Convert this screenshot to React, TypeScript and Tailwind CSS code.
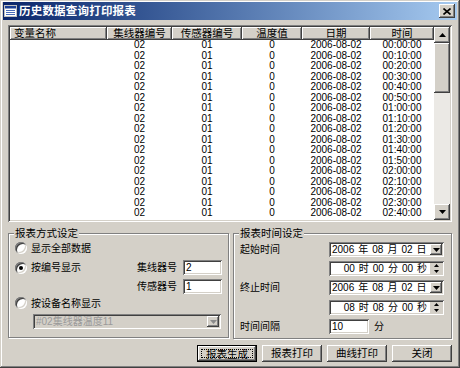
import React from "react";

const RAISED =
  "bg-[#d4d0c8] shadow-[inset_-1px_-1px_0_#404040,inset_1px_1px_0_#ffffff,inset_-2px_-2px_0_#808080,inset_2px_2px_0_#d4d0c8]";
const SUNKEN =
  "shadow-[inset_1px_1px_0_#808080,inset_-1px_-1px_0_#ffffff,inset_2px_2px_0_#404040,inset_-2px_-2px_0_#d4d0c8]";

const pad = (n: number) => (n < 10 ? `0${n}` : `${n}`);
const rows = Array.from({ length: 17 }, (_, i) => {
  const m = i * 10;
  return `${pad(Math.floor(m / 60))}:${pad(m % 60)}:00`;
});

const cols = [
  { w: "w-[97px]", label: "变量名称" },
  { w: "w-[65px]", label: "集线器编号" },
  { w: "w-[70px]", label: "传感器编号" },
  { w: "w-[60px]", label: "温度值" },
  { w: "w-[68px]", label: "日期" },
  { w: "w-[64px]", label: "时间" },
];

function Down({ color = "#000" }: { color?: string }) {
  return (
    <svg width="7" height="4" viewBox="0 0 7 4">
      <polygon points="0,0 7,0 3.5,4" fill={color} />
    </svg>
  );
}
function Up({ color = "#000" }: { color?: string }) {
  return (
    <svg width="7" height="4" viewBox="0 0 7 4">
      <polygon points="0,4 7,4 3.5,0" fill={color} />
    </svg>
  );
}

function Radio({ checked }: { checked?: boolean }) {
  return (
    <div
      className={`w-[12px] h-[12px] rounded-full bg-white flex items-center justify-center shrink-0 ${SUNKEN}`}
    >
      {checked && <div className="w-[4px] h-[4px] rounded-full bg-black" />}
    </div>
  );
}

function DateBox() {
  return (
    <div className={`w-[115px] h-[15px] bg-white flex items-center p-[2px] ${SUNKEN}`}>
      <div className="flex-1 flex items-center gap-[4px] pl-[1px] leading-[11px]">
        <span>2006</span>
        <span>年</span>
        <span>08</span>
        <span>月</span>
        <span>02</span>
        <span>日</span>
      </div>
      <div className={`w-[12px] h-full flex items-center justify-center ${RAISED}`}>
        <Down />
      </div>
    </div>
  );
}

function TimeBox({ h, m }: { h: string; m: string }) {
  return (
    <div className={`w-[115px] h-[15px] bg-white flex items-center p-[2px] ${SUNKEN}`}>
      <div className="flex-1 flex items-center justify-end gap-[4px] pr-[3px] leading-[11px]">
        <span>{h}</span>
        <span>时</span>
        <span>{m}</span>
        <span>分</span>
        <span>00</span>
        <span>秒</span>
      </div>
      <div className="w-[12px] h-full flex flex-col">
        <div className="flex-1 flex items-center justify-center bg-[#d4d0c8]">
          <svg width="5" height="3" viewBox="0 0 5 3">
            <polygon points="0,3 5,3 2.5,0" fill="#000" />
          </svg>
        </div>
        <div className="flex-1 flex items-center justify-center bg-[#d4d0c8]">
          <svg width="5" height="3" viewBox="0 0 5 3">
            <polygon points="0,0 5,0 2.5,3" fill="#000" />
          </svg>
        </div>
      </div>
    </div>
  );
}

function Field({ value, w }: { value: string; w: string }) {
  return (
    <div className={`${w} h-[15px] bg-white flex items-center px-[3px] leading-[11px] ${SUNKEN}`}>
      {value}
    </div>
  );
}

function Btn({ label, focused }: { label: string; focused?: boolean }) {
  if (focused) {
    return (
      <div className="w-[60px] h-[17px] border border-black">
        <div className={`w-full h-full flex items-center justify-center p-[3px] ${RAISED}`}>
          <div className="w-full h-full border border-dotted border-black flex items-center justify-center leading-[10px]">
            {label}
          </div>
        </div>
      </div>
    );
  }
  return (
    <div className={`w-[60px] h-[17px] flex items-center justify-center leading-[11px] ${RAISED}`}>
      {label}
    </div>
  );
}

export default function App() {
  return (
    <div
      className={`w-[460px] h-[368px] bg-[#d4d0c8] font-['Liberation_Sans','Noto_Sans_CJK_SC',sans-serif] text-[10.5px] text-black flex flex-col pt-[2px] px-[3px] overflow-hidden shadow-[inset_-1px_-1px_0_#404040,inset_1px_1px_0_#d4d0c8,inset_-2px_-2px_0_#808080,inset_2px_2px_0_#ffffff]`}
    >
      {/* Title bar */}
      <div className="h-[18px] shrink-0 flex items-center bg-linear-to-r from-[#0a246a] to-[#a6caf0] pl-[1px] pr-[2px]">
        <svg width="13" height="12" viewBox="0 0 13 12" className="shrink-0">
          <rect x="0.5" y="0.5" width="12" height="11" fill="#ffffff" stroke="#c0c0c0" />
          <rect x="1" y="1" width="11" height="2.5" fill="#1c3f94" />
          <rect x="2" y="5" width="9" height="1" fill="#4a6cb8" />
          <rect x="2" y="7" width="9" height="1" fill="#4a6cb8" />
          <rect x="2" y="9" width="9" height="1" fill="#4a6cb8" />
        </svg>
        <span className="ml-[2px] text-white font-bold text-[11.5px] leading-[14px] tracking-[0.2px]">
          历史数据查询打印报表
        </span>
        <div className={`ml-auto w-[16px] h-[14px] flex items-center justify-center ${RAISED}`}>
          <svg width="8" height="7" viewBox="0 0 8 7">
            <path d="M0.5 0.5L7.5 6.5M7.5 0.5L0.5 6.5" stroke="#000" strokeWidth="1.6" />
          </svg>
        </div>
      </div>

      {/* List view */}
      <div className={`mt-[5px] ml-[5px] w-[444px] h-[197px] shrink-0 bg-white p-[2px] flex ${SUNKEN}`}>
        <div className="flex-1 flex flex-col overflow-hidden">
          <div className="h-[13px] flex shrink-0">
            {cols.map((c, i) => (
              <div
                key={i}
                className={`${c.w} h-full flex items-center leading-[11px] ${
                  i === 0 ? "justify-start pl-[4px]" : "justify-center"
                } bg-[#d4d0c8] shadow-[inset_-1px_-1px_0_#404040,inset_1px_1px_0_#ffffff,inset_-2px_-2px_0_#808080]`}
              >
                {c.label}
              </div>
            ))}
          </div>
          <div className="flex flex-col text-[10px]">
            {rows.map((t, i) => (
              <div key={i} className="h-[10.5px] leading-[10.5px] flex">
                <div className="w-[97px]" />
                <div className="w-[65px] text-center">02</div>
                <div className="w-[70px] text-center">01</div>
                <div className="w-[60px] text-center">0</div>
                <div className="w-[68px] text-center">2006-08-02</div>
                <div className="w-[64px] text-center">{t}</div>
              </div>
            ))}
          </div>
        </div>
        <div className="w-[16px] h-full flex flex-col bg-[#ebe9e5]">
          <div className={`h-[16px] flex items-center justify-center shrink-0 ${RAISED}`}>
            <Up />
          </div>
          <div className="flex-1">
            <div className={`h-[50px] ${RAISED}`} />
          </div>
          <div className={`h-[16px] flex items-center justify-center shrink-0 ${RAISED}`}>
            <Down />
          </div>
        </div>
      </div>

      {/* Group boxes */}
      <div className="mt-[11px] ml-[5px] flex gap-[4px] items-start">
        {/* Left group */}
        <div className="relative w-[221px] h-[105px] border border-[#808080] shadow-[inset_1px_1px_0_#ffffff,1px_1px_0_#ffffff] text-[10px]">
          <span className="absolute -top-[7px] left-[5px] px-[1px] bg-[#d4d0c8] leading-[12px] text-[10.5px]">
            报表方式设定
          </span>
          <div className="flex flex-col pt-[7px] pl-[6px] pr-[6px]">
            <div className="h-[14px] flex items-center gap-[4px]">
              <Radio />
              <span>显示全部数据</span>
            </div>
            <div className="mt-[5px] h-[15px] flex items-center">
              <Radio checked />
              <span className="ml-[4px]">按编号显示</span>
              <span className="ml-auto mr-[6px]">集线器号</span>
              <Field value="2" w="w-[39px]" />
            </div>
            <div className="mt-[4px] h-[15px] flex items-center justify-end">
              <span className="mr-[6px]">传感器号</span>
              <Field value="1" w="w-[39px]" />
            </div>
            <div className="mt-[2px] h-[14px] flex items-center gap-[4px]">
              <Radio />
              <span>按设备名称显示</span>
            </div>
            <div
              className={`mt-[4px] ml-[18px] w-[188px] h-[15px] bg-[#d4d0c8] flex items-center p-[2px] ${SUNKEN}`}
            >
              <span className="flex-1 pl-[1px] text-[#9a9a9a] leading-[11px]">
                #02集线器温度11
              </span>
              <div className={`w-[12px] h-full flex items-center justify-center ${RAISED}`}>
                <Down color="#8a8a8a" />
              </div>
            </div>
          </div>
        </div>

        {/* Right group */}
        <div className="relative w-[219px] h-[106px] border border-[#808080] shadow-[inset_1px_1px_0_#ffffff,1px_1px_0_#ffffff] text-[10px]">
          <span className="absolute -top-[7px] left-[5px] px-[1px] bg-[#d4d0c8] leading-[12px] text-[10.5px]">
            报表时间设定
          </span>
          <div className="flex flex-col pt-[8px] pl-[6px] gap-[4px]">
            <div className="flex items-center">
              <span className="w-[89px]">起始时间</span>
              <DateBox />
            </div>
            <div className="flex items-center">
              <span className="w-[89px]" />
              <TimeBox h="00" m="00" />
            </div>
            <div className="flex items-center">
              <span className="w-[89px]">终止时间</span>
              <DateBox />
            </div>
            <div className="mt-[1px] flex items-center">
              <span className="w-[89px]" />
              <TimeBox h="08" m="08" />
            </div>
            <div className="flex items-center">
              <span className="w-[89px]">时间间隔</span>
              <Field value="10" w="w-[40px]" />
              <span className="ml-[5px]">分</span>
            </div>
          </div>
        </div>
      </div>

      {/* Buttons */}
      <div className="mt-[6px] flex justify-end gap-[5px] pr-[5px]">
        <Btn label="报表生成" focused />
        <Btn label="报表打印" />
        <Btn label="曲线打印" />
        <Btn label="关闭" />
      </div>
    </div>
  );
}
